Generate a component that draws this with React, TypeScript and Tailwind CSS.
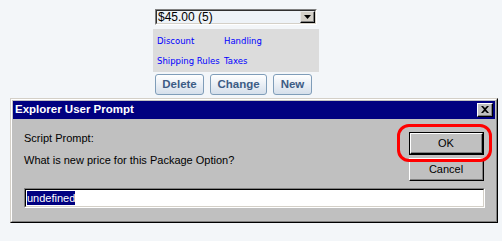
export default function App() {
  return (
    <div className="relative h-[241px] w-[502px] overflow-hidden bg-[#f3f6f9] font-['Liberation_Sans',Arial,sans-serif]">
      <div className="pl-[153px] pt-[9px]">
        {/* price select */}
        <div className="ml-[2px] w-[162px] border border-t-[#808080] border-l-[#808080] border-r-white border-b-white">
          <div className="flex h-[14px] items-center border border-t-[#303030] border-l-[#303030] border-r-[#d4d0c8] border-b-[#d4d0c8] bg-[#eef3f8]">
            <span className="flex-1 pl-[1px] text-[12px] leading-[12px] text-black">$45.00 (5)</span>
            <div className="h-[12px] w-[15px] border border-t-[#e8e8e8] border-l-[#e8e8e8] border-r-black border-b-black bg-[#d4d0c8]">
              <div className="flex h-full items-center justify-center border-b border-r border-[#808080]">
                <svg width="7" height="4" viewBox="0 0 7 4">
                  <path d="M0 0h7L3.5 4z" fill="#000" />
                </svg>
              </div>
            </div>
          </div>
        </div>

        {/* options panel */}
        <div className="mt-[4px] grid h-[43px] w-[166px] grid-cols-[67px_auto] bg-[#dcdcdc] pl-[4px] pt-[2px] font-['DejaVu_Sans',Verdana,sans-serif] text-[8.5px] text-[#0000ff]">
          <span className="flex h-[20px] items-center">Discount</span>
          <span className="flex h-[20px] items-center">Handling</span>
          <span className="flex h-[20px] items-center">Shipping Rules</span>
          <span className="flex h-[20px] items-center">Taxes</span>
        </div>

        {/* action buttons */}
        <div className="ml-[2px] mt-[2px] flex gap-[6px] text-[11.5px] font-bold text-[#3d5c85]">
          <button className="h-[21px] w-[49px] rounded-[3px] border border-[#7f9db9] bg-gradient-to-b from-white to-[#d5dfeb]">Delete</button>
          <button className="h-[21px] w-[57px] rounded-[3px] border border-[#7f9db9] bg-gradient-to-b from-white to-[#d5dfeb]">Change</button>
          <button className="h-[21px] w-[39px] rounded-[3px] border border-[#7f9db9] bg-gradient-to-b from-white to-[#d5dfeb]">New</button>
        </div>
      </div>

      {/* prompt dialog */}
      <div className="ml-[10px] mt-[3px] h-[125px] w-[488px] border border-t-[#d4d0c8] border-l-[#d4d0c8] border-r-black border-b-black">
        <div className="h-full border border-t-white border-l-white border-r-[#808080] border-b-[#808080] bg-[#c0c0c0] p-[1px]">
          <div className="flex h-[18px] items-center justify-between bg-[#000080] pl-[2px] pr-[2px]">
            <span className="text-[11.5px] font-bold text-white">Explorer User Prompt</span>
            <div className="h-[14px] w-[16px] border border-t-white border-l-white border-r-black border-b-black bg-[#c0c0c0]">
              <div className="flex h-full items-center justify-center border-b border-r border-[#808080]">
                <svg width="8" height="7" viewBox="0 0 8 7">
                  <path d="M0 0h2l2 2 2-2h2L5 3.5 8 7H6L4 5 2 7H0l3-3.5z" fill="#000" />
                </svg>
              </div>
            </div>
          </div>

          <div className="text-[11px] text-black">
            <div className="flex h-[69px] justify-between pl-[11px] pr-[11px]">
              <div className="pt-[12px]">
                <p className="leading-[14px]">Script Prompt:</p>
                <p className="mt-[8px] leading-[14px]">What is new price for this Package Option?</p>
              </div>
              <div className="flex flex-col gap-[3px] pt-[13px]">
                <div className="h-[23px] w-[75px] border border-black">
                  <div className="h-full border border-t-white border-l-white border-r-black border-b-black">
                    <div className="flex h-full items-center justify-center border-b border-r border-[#808080]">OK</div>
                  </div>
                </div>
                <div className="h-[23px] w-[75px] border border-t-white border-l-white border-r-black border-b-black">
                  <div className="flex h-full items-center justify-center border-b border-r border-[#808080]">Cancel</div>
                </div>
              </div>
            </div>

            <div className="ml-[11px] h-[20px] w-[461px] border border-t-[#808080] border-l-[#808080] border-r-white border-b-white">
              <div className="flex h-full items-center border border-t-black border-l-black border-r-[#d4d0c8] border-b-[#d4d0c8] bg-white pl-[1px]">
                <span className="bg-[#000080] leading-[14px] text-white">undefined</span>
              </div>
            </div>
          </div>
        </div>
      </div>

      {/* highlight ring around OK */}
      <div className="absolute left-[397px] top-[124px] h-[38px] w-[95px] rounded-[12px] border-[3px] border-[#ff0000]" />
    </div>
  )
}
